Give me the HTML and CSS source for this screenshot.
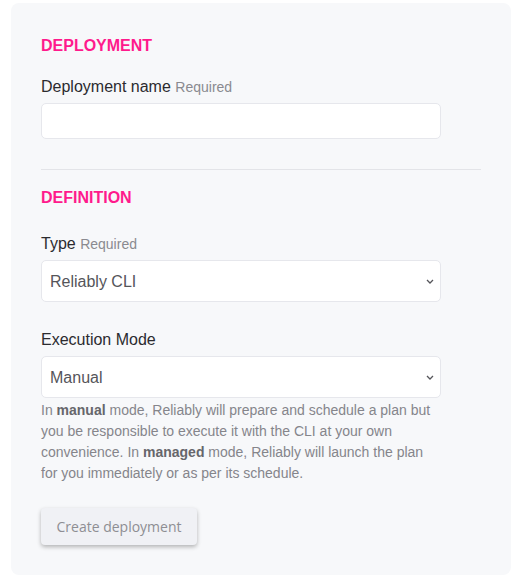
FILE: index.html
```html
<!DOCTYPE html>
<html>
<head>
<meta charset="utf-8">
<link rel="stylesheet" href="styles.css">
</head>
<body>
<form class="card">
  <h2 class="section-title">DEPLOYMENT</h2>
  <div class="field">
    <label class="label">Deployment name <span class="req">Required</span></label>
    <input class="input" type="text">
  </div>
  <hr class="divider">
  <h2 class="section-title second">DEFINITION</h2>
  <div class="field">
    <label class="label">Type <span class="req">Required</span></label>
    <div class="select-wrap">
      <select class="select"><option>Reliably CLI</option></select>
      <svg class="chev" width="8" height="5" viewBox="0 0 8 5"><path d="M1 1 L4 4 L7 1" fill="none" stroke="#55555a" stroke-width="1.3"/></svg>
    </div>
  </div>
  <div class="field mode">
    <label class="label">Execution Mode</label>
    <div class="select-wrap">
      <select class="select"><option>Manual</option></select>
      <svg class="chev" width="8" height="5" viewBox="0 0 8 5"><path d="M1 1 L4 4 L7 1" fill="none" stroke="#55555a" stroke-width="1.3"/></svg>
    </div>
    <p class="help">In <b>manual</b> mode, Reliably will prepare and schedule a plan but you be responsible to execute it with the CLI at your own convenience. In <b>managed</b> mode, Reliably will launch the plan for you immediately or as per its schedule.</p>
  </div>
  <button class="btn" type="button">Create deployment</button>
</form>
</body>
</html>
```
FILE: styles.css
```css
html, body { margin: 0; padding: 0; background: #fff; }
body { font-family: "Liberation Sans", Arial, sans-serif; color: #2b2b2f; }
.card {
  margin: 3px 0 0 11px;
  width: 500px;
  box-sizing: border-box;
  padding: 31px 30px 30px 30px;
  background: #f7f8fa;
  border-radius: 8px;
  display: flex;
  flex-direction: column;
  align-items: flex-start;
}
.section-title {
  margin: 0;
  font-size: 16px;
  line-height: 24px;
  font-weight: bold;
  color: #ff1a8c;
}
.field { display: flex; flex-direction: column; margin-top: 17px; }
.second + .field { margin-top: 22px; }
.mode { margin-top: 26px; }
.label { font-size: 16px; line-height: 24px; margin-bottom: 4px; color: #2b2b2f; }
.req { font-size: 14px; color: #8a8a90; }
.input {
  width: 400px; height: 36px; box-sizing: border-box;
  border: 1px solid #e6e7ec; border-radius: 5px; background: #fff; margin: 0;
}
.select-wrap { position: relative; width: 400px; }
.select {
  display: block;
  width: 400px; height: 42px; box-sizing: border-box;
  border: 1px solid #e6e7ec; border-radius: 5px; background: #fff; margin: 0;
  padding: 0 8px;
  -webkit-appearance: none; appearance: none;
  font-family: "Liberation Sans", Arial, sans-serif; font-size: 16px; color: #55555a;
}
.chev { position: absolute; right: 7px; top: 19px; pointer-events: none; }
.divider {
  width: 440px; margin: 30px 0 16px 0; border: 0; border-top: 1px solid #e3e4e8; height: 0;
}
.help {
  margin: 2px 0 0 0; width: 400px; font-size: 14px; line-height: 21px; color: #85858b;
}
.help b { color: #66666b; }
.btn {
  margin-top: 24px;
  height: 37px; width: 156px;
  font-family: "Open Sans", sans-serif; font-size: 14px; color: #8e8e93;
  background: #f0f1f5; border: 0; border-radius: 4px;
  box-shadow: 0 2px 4px rgba(0,0,0,0.28);
}
```
